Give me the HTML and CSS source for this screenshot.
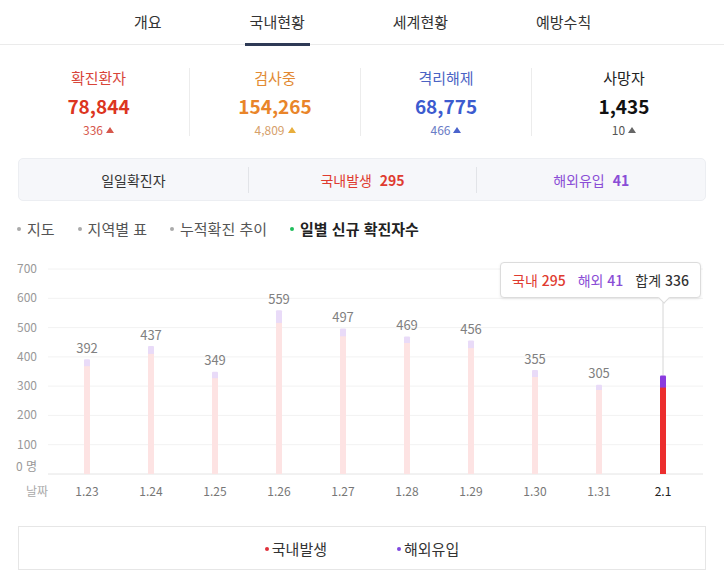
FILE: index.html
```html
<!DOCTYPE html>
<html lang="ko">
<head>
    <meta charset="UTF-8">
    <meta name="viewport" content="width=device-width, initial-scale=1.0">
    <title>국내현황</title>
    <link rel="stylesheet" href="styles.css">
</head>
<body>

<nav class="tabs">
    <a class="tab" href="#">개요</a>
    <a class="tab active" href="#">국내현황</a>
    <a class="tab" href="#">세계현황</a>
    <a class="tab" href="#">예방수칙</a>
</nav>

<section class="stats">
    <div class="stat confirmed">
        <div class="stat-label">확진환자</div>
        <div class="stat-num">78,844</div>
        <div class="stat-sub">336<span class="up"></span></div>
    </div>
    <div class="stat testing">
        <div class="stat-label">검사중</div>
        <div class="stat-num">154,265</div>
        <div class="stat-sub">4,809<span class="up"></span></div>
    </div>
    <div class="stat released">
        <div class="stat-label">격리해제</div>
        <div class="stat-num">68,775</div>
        <div class="stat-sub">466<span class="up"></span></div>
    </div>
    <div class="stat deaths">
        <div class="stat-label">사망자</div>
        <div class="stat-num">1,435</div>
        <div class="stat-sub">10<span class="up"></span></div>
    </div>
</section>

<section class="daily">
    <div class="daily-cell">일일확진자</div>
    <div class="daily-cell local">국내발생 <b>295</b></div>
    <div class="daily-cell overseas">해외유입 <b>41</b></div>
</section>

<ul class="subtabs">
    <li>지도</li>
    <li>지역별 표</li>
    <li>누적확진 추이</li>
    <li class="on">일별 신규 확진자수</li>
</ul>

<div class="chart">
    <svg class="chart-svg" width="724" height="262" viewBox="0 0 724 262">
        <!-- grid -->
        <g class="grid">
            <line x1="48" y1="19" x2="703" y2="19"/>
            <line x1="48" y1="48.3" x2="703" y2="48.3"/>
            <line x1="48" y1="77.6" x2="703" y2="77.6"/>
            <line x1="48" y1="106.9" x2="703" y2="106.9"/>
            <line x1="48" y1="136.1" x2="703" y2="136.1"/>
            <line x1="48" y1="165.4" x2="703" y2="165.4"/>
            <line x1="48" y1="194.7" x2="703" y2="194.7"/>
        </g>
        <line class="axis" x1="48" y1="224" x2="703" y2="224"/>

        <g class="ylabels">
            <text x="37" y="23">700</text>
            <text x="37" y="52.3">600</text>
            <text x="37" y="81.6">500</text>
            <text x="37" y="110.9">400</text>
            <text x="37" y="140.1">300</text>
            <text x="37" y="169.4">200</text>
            <text x="37" y="198.7">100</text>
            <text x="37" y="221">0 명</text>
        </g>

        <!-- bars: overseas on top of domestic -->
        <g class="bars">
            <rect class="ov" x="84" y="109.2" width="6" height="114.8" rx="1"/>
            <rect class="dom" x="84" y="116.2" width="6" height="107.8"/>
            <rect class="ov" x="148" y="96" width="6" height="128" rx="1"/>
            <rect class="dom" x="148" y="103.9" width="6" height="120.1"/>
            <rect class="ov" x="212" y="121.8" width="6" height="102.2" rx="1"/>
            <rect class="dom" x="212" y="128.2" width="6" height="95.8"/>
            <rect class="ov" x="276" y="60.3" width="6" height="163.7" rx="1"/>
            <rect class="dom" x="276" y="72.9" width="6" height="151.1"/>
            <rect class="ov" x="340" y="78.4" width="6" height="145.6" rx="1"/>
            <rect class="dom" x="340" y="86.3" width="6" height="137.7"/>
            <rect class="ov" x="404" y="86.6" width="6" height="137.4" rx="1"/>
            <rect class="dom" x="404" y="93" width="6" height="131"/>
            <rect class="ov" x="468" y="90.5" width="6" height="133.5" rx="1"/>
            <rect class="dom" x="468" y="98.1" width="6" height="125.9"/>
            <rect class="ov" x="532" y="120" width="6" height="104" rx="1"/>
            <rect class="dom" x="532" y="127" width="6" height="97"/>
            <rect class="ov" x="596" y="134.7" width="6" height="89.3" rx="1"/>
            <rect class="dom" x="596" y="140" width="6" height="84"/>
            <line class="pointer-line" x1="663" y1="48" x2="663" y2="125.6"/>
            <rect class="ov-now" x="660" y="125.6" width="6" height="98.4" rx="1"/>
            <rect class="dom-now" x="660" y="137.6" width="6" height="86.4"/>
        </g>

        <g class="values">
            <text x="87" y="102.7">392</text>
            <text x="151" y="89.5">437</text>
            <text x="215" y="115.3">349</text>
            <text x="279" y="53.8">559</text>
            <text x="343" y="71.9">497</text>
            <text x="407" y="80.1">469</text>
            <text x="471" y="84">456</text>
            <text x="535" y="113.5">355</text>
            <text x="599" y="128.2">305</text>
        </g>

        <g class="xlabels">
            <text class="xname" x="37" y="246">날짜</text>
            <text x="87" y="246">1.23</text>
            <text x="151" y="246">1.24</text>
            <text x="215" y="246">1.25</text>
            <text x="279" y="246">1.26</text>
            <text x="343" y="246">1.27</text>
            <text x="407" y="246">1.28</text>
            <text x="471" y="246">1.29</text>
            <text x="535" y="246">1.30</text>
            <text x="599" y="246">1.31</text>
            <text class="today" x="663" y="246">2.1</text>
        </g>
    </svg>

    <div class="tooltip">
        <span class="tt-local">국내 <b>295</b></span>
        <span class="tt-over">해외 <b>41</b></span>
        <span class="tt-sum">합계 <b>336</b></span>
    </div>
</div>

<div class="legend">
    <span class="legend-item local">국내발생</span>
    <span class="legend-item overseas">해외유입</span>
</div>

</body>
</html>
```

FILE: styles.css
```css
body {
    margin: 0;
    padding: 0;
    background-color: #fff;
    color: #333;
    font-family: "Noto Sans CJK KR", "Noto Sans", sans-serif;
    font-size: 14px;
}

/* Top tabs */
.tabs {
    display: flex;
    gap: 78px;
    padding-left: 129px;
    height: 44px;
    border-bottom: 1px solid #ebebeb;
}

.tab {
    display: block;
    padding: 0 5px;
    line-height: 43px;
    color: #333;
    text-decoration: none;
    font-size: 15px;
    border-bottom: 3px solid transparent;
    margin-bottom: -2px;
}

.tab.active {
    border-bottom-color: #2e3a56;
}

/* Summary numbers */
.stats {
    display: grid;
    grid-template-columns: 181px 171px 171px 1fr;
    margin: 23px 8px 0;
}

.stat {
    text-align: center;
    border-left: 1px solid #ececec;
}

.stat:first-child {
    border-left: none;
}

.stat-label {
    font-size: 15px;
    line-height: 20px;
}

.stat-num {
    font-size: 19px;
    font-weight: bold;
    line-height: 36px;
}

.stat-sub {
    font-size: 12px;
    line-height: 12px;
}

.up {
    display: inline-block;
    width: 0;
    height: 0;
    margin-left: 3px;
    border-left: 4px solid transparent;
    border-right: 4px solid transparent;
    border-bottom: 6px solid currentColor;
    vertical-align: 2px;
}

.confirmed .stat-label { color: #d8453a; }
.confirmed .stat-num { color: #dc3520; }
.confirmed .stat-sub { color: #d6574c; }

.testing .stat-label { color: #e28a32; }
.testing .stat-num { color: #e9852a; }
.testing .stat-sub { color: #d6a06a; }
.testing .up { color: #e8ae3c; }

.released .stat-label { color: #4b63c4; }
.released .stat-num { color: #3c5bcf; }
.released .stat-sub { color: #6a7cc6; }
.released .up { color: #4a63cc; }

.deaths .stat-label { color: #222; }
.deaths .stat-num { color: #111; }
.deaths .stat-sub { color: #555; }
.deaths .up { color: #666; }

/* Daily box */
.daily {
    display: grid;
    grid-template-columns: repeat(3, 1fr);
    margin: 22px 18px 0 18px;
    height: 41px;
    background-color: #f6f7fa;
    border: 1px solid #eceef2;
    border-radius: 5px;
    align-items: center;
}

.daily-cell {
    text-align: center;
    line-height: 26px;
    border-left: 1px solid #e2e4e8;
    color: #333;
}

.daily-cell:first-child {
    border-left: none;
}

.daily-cell b {
    margin-left: 4px;
}

.daily-cell.local { color: #df3b30; }
.daily-cell.overseas { color: #8a4dd6; }

/* Chart sub tabs */
.subtabs {
    list-style: none;
    display: flex;
    gap: 23px;
    margin: 17px 0 0 17px;
    padding: 0;
    line-height: 22px;
    font-size: 15px;
    color: #555;
}

.subtabs li::before {
    content: "";
    display: inline-block;
    width: 4px;
    height: 4px;
    margin-right: 6px;
    border-radius: 50%;
    background-color: #aaa;
    vertical-align: 4px;
}

.subtabs li.on {
    color: #222;
    font-weight: bold;
}

.subtabs li.on::before {
    background-color: #1fbd5c;
}

/* Chart */
.chart {
    position: relative;
    margin-top: 10px;
    height: 262px;
}

.chart-svg {
    display: block;
    font-family: "Noto Sans CJK KR", "Noto Sans", sans-serif;
}

.grid line {
    stroke: #f2f2f2;
    stroke-width: 1;
}

.axis {
    stroke: #e4e4e4;
    stroke-width: 1;
}

.ylabels text {
    font-size: 12px;
    fill: #999;
    text-anchor: end;
}

.bars .ov { fill: #e9dbf8; }
.bars .dom { fill: #fde3e3; }
.bars .ov-now { fill: #8a3bdf; }
.bars .dom-now { fill: #ec2e2e; }

.pointer-line {
    stroke: #d6d6d6;
    stroke-width: 1;
}

.values text {
    font-size: 13px;
    fill: #808080;
    text-anchor: middle;
}

.xlabels text {
    font-size: 12px;
    fill: #777;
    text-anchor: middle;
}

.xlabels .xname {
    fill: #aaa;
}

.xlabels .today {
    fill: #222;
}

.tooltip {
    position: absolute;
    top: 12px;
    left: 500px;
    width: 199px;
    height: 34px;
    border: 1px solid #dcdcdc;
    border-radius: 4px;
    background-color: #fff;
    box-shadow: 0 1px 3px rgba(0, 0, 0, 0.08);
    display: flex;
    justify-content: center;
    align-items: center;
    gap: 12px;
    font-size: 14px;
}

.tooltip::after {
    content: "";
    position: absolute;
    left: 159px;
    bottom: -5px;
    width: 7px;
    height: 7px;
    background-color: #fff;
    border-right: 1px solid #dcdcdc;
    border-bottom: 1px solid #dcdcdc;
    transform: rotate(45deg);
}

.tooltip b {
    font-weight: 500;
}

.tt-local { color: #df3b30; }
.tt-over { color: #8a4dd6; }
.tt-sum { color: #333; }

/* Legend */
.legend {
    display: flex;
    justify-content: center;
    gap: 70px;
    margin: 14px 18px 0 18px;
    height: 42px;
    border: 1px solid #e6e6e6;
    align-items: center;
    font-size: 15px;
    color: #333;
}

.legend-item::before {
    content: "";
    display: inline-block;
    width: 4px;
    height: 4px;
    margin-right: 3px;
    border-radius: 50%;
    vertical-align: 4px;
}

.legend-item.local::before { background-color: #e0303a; }
.legend-item.overseas::before { background-color: #7f48e0; }
```
